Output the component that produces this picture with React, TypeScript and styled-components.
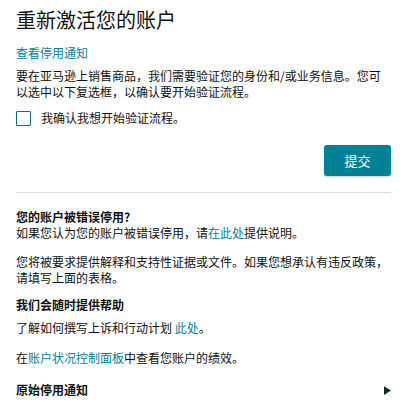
import styled, { createGlobalStyle } from "styled-components";

const GlobalStyle = createGlobalStyle`
  body {
    margin: 0;
    background: #ffffff;
    font-family: "Noto Sans CJK SC", "Noto Sans", sans-serif;
    color: #0f1111;
  }
`;

const teal = "#008296";

export default function App() {
  return (
    <>
      <GlobalStyle />
      <Page>
        <Title>重新激活您的账户</Title>
        <TopLink href="#">查看停用通知</TopLink>
        <Text gap={7}>
          要在亚马逊上销售商品，我们需要验证您的身份和/或业务信息。您可以选中以下复选框，以确认要开始验证流程。
        </Text>

        <CheckRow>
          <Checkbox type="checkbox" />
          <span>我确认我想开始验证流程。</span>
        </CheckRow>

        <Actions>
          <SubmitButton>提交</SubmitButton>
        </Actions>

        <Divider />

        <Heading gap={16}>您的账户被错误停用?</Heading>
        <Text>
          如果您认为您的账户被错误停用，请<Link href="#">在此处</Link>提供说明。
        </Text>
        <Text gap={13}>
          您将被要求提供解释和支持性证据或文件。如果您想承认有违反政策，请填写上面的表格。
        </Text>

        <Heading gap={11}>我们会随时提供帮助</Heading>
        <Text gap={7}>
          了解如何撰写上诉和行动计划 <Link href="#">此处</Link>。
        </Text>
        <Text gap={14}>
          在<Link href="#">账户状况控制面板</Link>中查看您账户的绩效。
        </Text>

        <Disclosure>
          <Heading>原始停用通知</Heading>
          <Arrow viewBox="0 0 8 10">
            <path d="M0 0 L8 5 L0 10 Z" fill="#0f2a2e" />
          </Arrow>
        </Disclosure>
      </Page>
    </>
  );
}

const Page = styled.div`
  width: 375px;
  padding: 6px 0 0 16px;
  display: flex;
  flex-direction: column;
  font-size: 12px;
  line-height: 16px;
`;

const Title = styled.h1`
  margin: 0;
  font-size: 20px;
  line-height: 28px;
  font-weight: 400;
  color: #0f1111;
`;

const TopLink = styled.a`
  margin-top: 11px;
  color: ${teal};
  text-decoration: none;
  align-self: flex-start;
`;

const Link = styled.a`
  color: ${teal};
  text-decoration: none;
`;

const Text = styled.p<{ gap?: number }>`
  margin: ${(p) => p.gap ?? 0}px 0 0;
`;

const Heading = styled.div<{ gap?: number }>`
  margin-top: ${(p) => p.gap ?? 0}px;
  font-weight: 700;
`;

const CheckRow = styled.label`
  margin-top: 10px;
  display: flex;
  align-items: center;
  gap: 10px;
`;

const Checkbox = styled.input`
  appearance: none;
  margin: 0;
  width: 15px;
  height: 15px;
  border: 1.5px solid #0b6e7c;
  border-radius: 1px;
  background: #fff;
  box-sizing: border-box;
`;

const Actions = styled.div`
  margin-top: 19px;
  display: flex;
  justify-content: flex-end;
`;

const SubmitButton = styled.button`
  width: 67px;
  height: 31px;
  border: none;
  border-radius: 3px;
  background: ${teal};
  color: #fff;
  font-family: inherit;
  font-size: 13px;
  box-shadow: 0 1px 2px rgba(0, 0, 0, 0.2);
`;

const Divider = styled.hr`
  margin: 16px 0 0;
  border: none;
  border-top: 1px solid #dddddd;
`;

const Disclosure = styled.div`
  margin-top: 16px;
  display: flex;
  align-items: center;
  justify-content: space-between;
`;

const Arrow = styled.svg`
  width: 7px;
  height: 9px;
`;
